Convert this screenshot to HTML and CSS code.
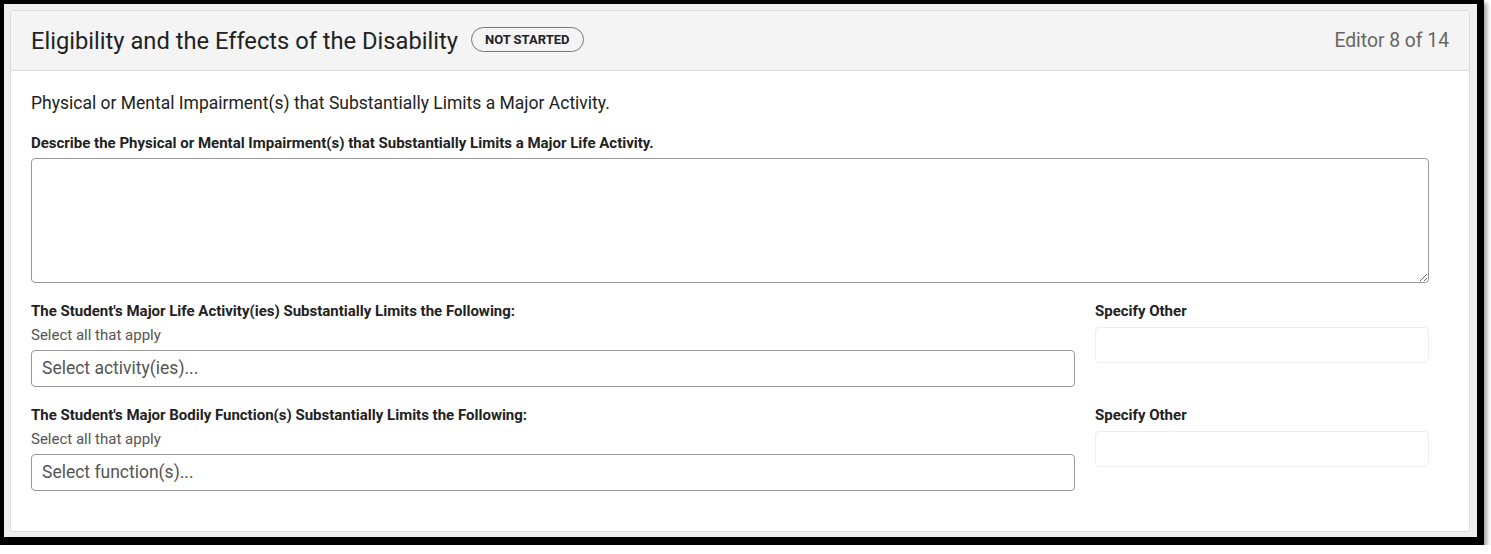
FILE: index.html
```html
<!DOCTYPE html>
<html>
<head>
<meta charset="utf-8">
<link rel="stylesheet" href="styles.css">
</head>
<body>
<div class="frame">
  <div class="card">
    <div class="card-header">
      <div class="title-wrap">
        <h1 class="title">Eligibility and the Effects of the Disability</h1>
        <span class="badge">NOT STARTED</span>
      </div>
      <div class="editor-count">Editor 8 of 14</div>
    </div>
    <div class="card-body">
      <p class="intro">Physical or Mental Impairment(s) that Substantially Limits a Major Activity.</p>
      <label class="field-label">Describe the Physical or Mental Impairment(s) that Substantially Limits a Major Life Activity.</label>
      <textarea class="textarea"></textarea>

      <div class="row">
        <div class="col-main">
          <div class="field-label">The Student's Major Life Activity(ies) Substantially Limits the Following:</div>
          <div class="hint">Select all that apply</div>
          <div class="select">Select activity(ies)...</div>
        </div>
        <div class="col-side">
          <div class="field-label">Specify Other</div>
          <div class="other-input"></div>
        </div>
      </div>

      <div class="row">
        <div class="col-main">
          <div class="field-label">The Student's Major Bodily Function(s) Substantially Limits the Following:</div>
          <div class="hint">Select all that apply</div>
          <div class="select">Select function(s)...</div>
        </div>
        <div class="col-side">
          <div class="field-label">Specify Other</div>
          <div class="other-input"></div>
        </div>
      </div>
    </div>
  </div>
</div>
</body>
</html>
```
FILE: styles.css
```css
html, body {
  margin: 0;
  padding: 0;
  background: #ffffff;
}
body {
  font-family: Roboto, "Liberation Sans", sans-serif;
  color: #222;
}
.frame {
  box-sizing: border-box;
  width: 1484px;
  height: 545px;
  border-style: solid;
  border-color: #000;
  border-width: 4px 7px 8px 4px;
  background: #efefef;
  padding: 6px 7px 5px 6px;
  box-shadow: 3px 3px 4px rgba(0,0,0,0.35);
}
.card {
  box-sizing: border-box;
  height: 100%;
  background: #fff;
  border: 1px solid #dcdcdc;
  border-radius: 3px;
  overflow: hidden;
}
.card-header {
  height: 59px;
  background: #f4f4f4;
  border-bottom: 1px solid #dcdcdc;
  display: flex;
  align-items: center;
  justify-content: space-between;
  padding: 0 20px;
}
.title-wrap {
  display: flex;
  align-items: center;
}
.title {
  margin: 0;
  font-size: 23.7px;
  font-weight: 400;
  color: #222;
  line-height: 30px;
}
.badge {
  margin-left: 13px;
  box-sizing: border-box;
  height: 25px;
  padding: 0 13px;
  border: 1px solid #777;
  border-radius: 13px;
  font-size: 13px;
  font-weight: 700;
  line-height: 23px;
  color: #222;
  position: relative;
  top: -1px;
}
.editor-count {
  font-size: 19.3px;
  color: #666;
}
.card-body {
  padding: 20px 40px 20px 20px;
}
.intro {
  margin: 0;
  font-size: 17.5px;
  line-height: 24px;
  color: #222;
}
.field-label {
  display: block;
  margin-top: 18px;
  font-size: 15px;
  font-weight: 700;
  line-height: 20px;
  color: #222;
}
.textarea {
  display: block;
  box-sizing: border-box;
  width: 100%;
  height: 125px;
  margin-top: 5px;
  border: 1px solid #999;
  border-radius: 4px;
  resize: vertical;
  font-family: inherit;
}
.row {
  display: flex;
  gap: 20px;
}
.row .field-label {
  margin-top: 18px;
}
.col-main {
  flex: 1;
}
.col-side {
  width: 334px;
}
.hint {
  margin-top: 4px;
  font-size: 15px;
  line-height: 20px;
  color: #555;
}
.select {
  box-sizing: border-box;
  height: 37px;
  margin-top: 5px;
  border: 1px solid #999;
  border-radius: 4px;
  padding: 0 10px;
  font-size: 17.5px;
  line-height: 35px;
  color: #555;
}
.other-input {
  box-sizing: border-box;
  height: 36px;
  margin-top: 6px;
  border: 1px solid #eee;
  border-radius: 4px;
}
```
